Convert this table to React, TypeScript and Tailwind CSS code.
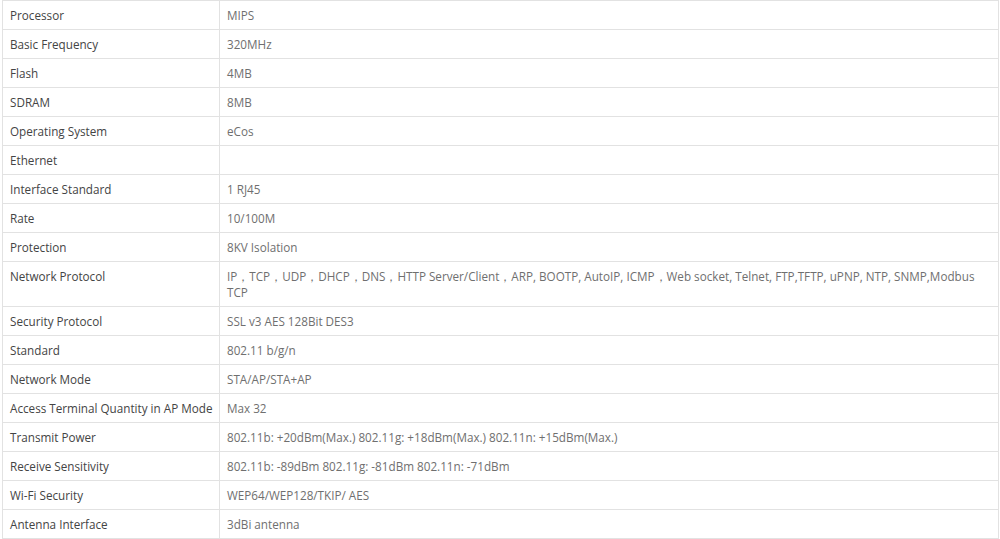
import React from "react";

const NP = (
  <>
    IP{"\uff0c"}TCP{"\uff0c"}UDP{"\uff0c"}DHCP{"\uff0c"}DNS{"\uff0c"}HTTP Server/Client{"\uff0c"}ARP, BOOTP, AutoIP, ICMP{"\uff0c"}Web
    socket, Telnet, FTP,TFTP, uPNP, NTP, SNMP,Modbus
    <br />
    TCP
  </>
);

const rows: [string, React.ReactNode][] = [
  ["Processor", "MIPS"],
  ["Basic Frequency", "320MHz"],
  ["Flash", "4MB"],
  ["SDRAM", "8MB"],
  ["Operating System", "eCos"],
  ["Ethernet", ""],
  ["Interface Standard", "1 RJ45"],
  ["Rate", "10/100M"],
  ["Protection", "8KV Isolation"],
  ["Network Protocol", NP],
  ["Security Protocol", "SSL v3 AES 128Bit DES3"],
  ["Standard", "802.11 b/g/n"],
  ["Network Mode", "STA/AP/STA+AP"],
  ["Access Terminal Quantity in AP Mode", "Max 32"],
  ["Transmit Power", "802.11b: +20dBm(Max.) 802.11g: +18dBm(Max.) 802.11n: +15dBm(Max.)"],
  ["Receive Sensitivity", "802.11b: -89dBm 802.11g: -81dBm 802.11n: -71dBm"],
  ["Wi-Fi Security", "WEP64/WEP128/TKIP/ AES"],
  ["Antenna Interface", "3dBi antenna"],
];

export default function App() {
  return (
    <div className="w-[1000px] h-[539px] overflow-hidden bg-white pl-[2px]">
      <table
        className="w-[997px] border-collapse text-[11.7px] leading-[16px]"
        style={{ fontFamily: '"Open Sans", "Noto Sans", sans-serif', tableLayout: "fixed" }}
      >
        <colgroup>
          <col className="w-[217px]" />
          <col />
        </colgroup>
        <tbody>
          {rows.map(([k, v]) => (
            <tr key={k}>
              <td className="border border-[#e2e2e2] px-[7px] py-[6px] align-top text-[#444444] whitespace-nowrap">
                {k}
              </td>
              <td className="border border-[#e2e2e2] px-[7px] py-[6px] align-top text-[#6f6f6f]">
                {v}
              </td>
            </tr>
          ))}
        </tbody>
      </table>
    </div>
  );
}
